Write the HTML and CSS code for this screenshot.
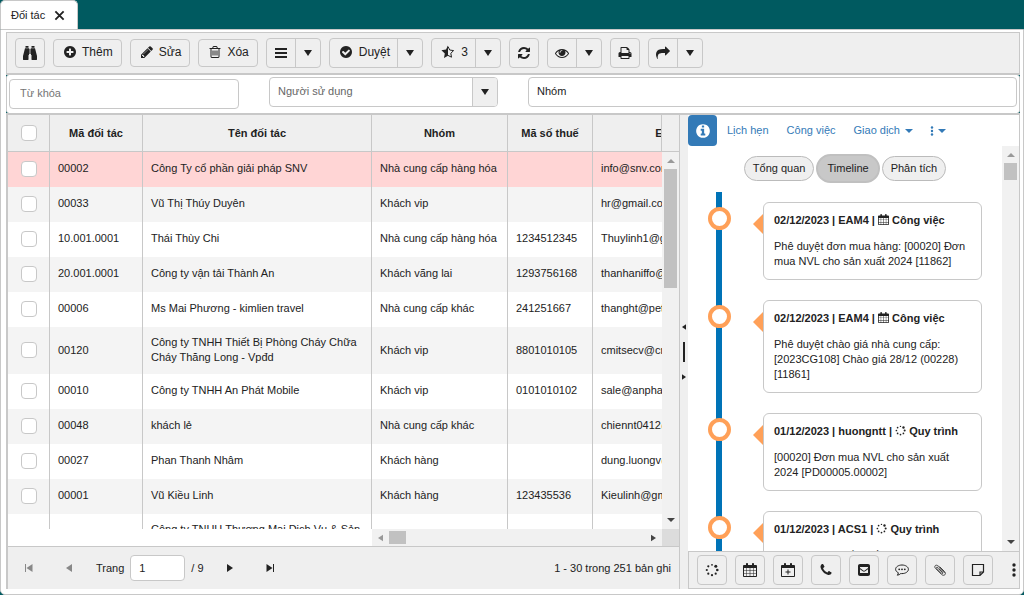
FILE: index.html
```
<!DOCTYPE html>
<html lang="vi">
<head>
<meta charset="utf-8">
<title>Đối tác</title>
<link rel="stylesheet" href="styles.css">
</head>
<body>
<svg class="sprite" aria-hidden="true">
  <symbol id="close" viewBox="0 0 12 12"><path d="M1.5 1.5l9 9M10.500 1.500l-9 9" stroke="currentColor" stroke-width="2"/></symbol>
  <symbol id="binoculars" viewBox="0 0 16 16"><path d="M3.500 1h3v1.800h-3zM9.500 1h3v1.800h-3zM3 3.300h4V10h-.5v4.500c0 .3-.2.500-.5.500H1.500c-.3 0-.5-.2-.5-.5V11zM9 3.300h4L15 11v3.500c0 .3-.2.500-.5.500H10c-.3 0-.5-.2-.5-.5V10H9zM7.400 3.800h1.200V9H7.400z"/></symbol>
  <symbol id="plus" viewBox="0 0 1792 1792"><path d="M1344 960v-128q0-26-19-45t-45-19h-256v-256q0-26-19-45t-45-19h-128q-26 0-45 19t-19 45v256h-256q-26 0-45 19t-19 45v128q0 26 19 45t45 19h256v256q0 26 19 45t45 19h128q26 0 45-19t19-45v-256h256q26 0 45-19t19-45zm320-64q0 209-103 385.500t-279.500 279.500-385.500 103-385.500-103-279.500-279.500-103-385.500 103-385.500 279.500-279.500 385.500-103 385.500 103 279.500 279.500 103 385.500z"/></symbol>
  <symbol id="pencil" viewBox="0 0 1792 1792"><path d="M491 1536l91-91-235-235-91 91v107h128v128h107zm523-928q0-22-22-22-10 0-17 7l-542 542q-7 7-7 17 0 22 22 22 10 0 17-7l542-542q7-7 7-17zm-54-192l416 416-832 832h-416v-416zm683 96q0 53-37 90l-166 166-416-416 166-165q36-38 90-38 53 0 91 38l235 234q37 39 37 91z"/></symbol>
  <symbol id="trash" viewBox="0 0 1792 1792"><path d="M704 736v576q0 14-9 23t-23 9h-64q-14 0-23-9t-9-23v-576q0-14 9-23t23-9h64q14 0 23 9t9 23zm256 0v576q0 14-9 23t-23 9h-64q-14 0-23-9t-9-23v-576q0-14 9-23t23-9h64q14 0 23 9t9 23zm256 0v576q0 14-9 23t-23 9h-64q-14 0-23-9t-9-23v-576q0-14 9-23t23-9h64q14 0 23 9t9 23zm128 724v-948h-896v948q0 22 7 40.500t14.500 27 10.500 8.500h832q3 0 10.500-8.500t14.500-27 7-40.500zm-672-1076h448l-48-117q-7-9-17-11h-317q-10 2-17 11zm928 32v64q0 14-9 23t-23 9h-96v948q0 83-47 143.500t-113 60.500h-832q-66 0-113-58.500t-47-141.500v-952h-96q-14 0-23-9t-9-23v-64q0-14 9-23t23-9h309l70-167q15-37 54-63t79-26h320q40 0 79 26t54 63l70 167h309q14 0 23 9t9 23z"/></symbol>
  <symbol id="bars" viewBox="0 0 14 14"><path d="M1 2h12v2H1zM1 6h12v2H1zM1 10h12v2H1z"/></symbol>
  <symbol id="check" viewBox="0 0 1792 1792"><path d="M1412 734q0-28-18-46l-91-90q-19-19-45-19t-45 19l-408 407-226-226q-19-19-45-19t-45 19l-91 90q-18 18-18 46 0 27 18 45l362 362q19 19 45 19 27 0 46-19l543-543q18-18 18-45zm252 162q0 209-103 385.500t-279.500 279.500-385.500 103-385.500-103-279.500-279.500-103-385.500 103-385.500 279.500-279.500 385.500-103 385.500 103 279.500 279.500 103 385.500z"/></symbol>
  <symbol id="star" viewBox="0 0 14 14"><path d="M7 .4v10.400l-4 2.300.8-4.600L.4 5.300 5 4.600z"/><path d="M7 1.500l1.700 3.500 3.900.6-2.800 2.700.7 3.900L7 10.400" fill="none" stroke="currentColor"/></symbol>
  <symbol id="refresh" viewBox="0 0 1792 1792"><path d="M1639 1056q0 5-1 7-64 268-268 434.500t-478 166.500q-146 0-282.500-55t-243.500-157l-129 129q-19 19-45 19t-45-19-19-45v-448q0-26 19-45t45-19h448q26 0 45 19t19 45-19 45l-137 137q71 66 161 102t187 36q134 0 250-65t186-179q11-17 53-117 8-23 30-23h192q13 0 22.500 9.500t9.500 22.500zm25-800v448q0 26-19 45t-45 19h-448q-26 0-45-19t-19-45 19-45l138-138q-148-137-349-137-134 0-250 65t-186 179q-11 17-53 117-8 23-30 23h-199q-13 0-22.500-9.500t-9.500-22.500v-7q65-268 270-434.500t480-166.500q146 0 284 55.500t245 156.500l130-129q19-19 45-19t45 19 19 45z"/></symbol>
  <symbol id="eye" viewBox="0 0 1792 1792"><path d="M1664 960q-152-236-381-353 61 104 61 225 0 185-131.500 316.500t-316.500 131.500-316.500-131.500-131.500-316.500q0-121 61-225-229 117-381 353 133 205 333.500 326.500t434.500 121.500 434.500-121.500 333.500-326.500zm-720-384q0-20-14-34t-34-14q-125 0-214.500 89.500t-89.500 214.500q0 20 14 34t34 14 34-14 14-34q0-86 61-147t147-61q20 0 34-14t14-34zm848 384q0 34-20 69-140 230-376.500 368.500t-499.500 138.500-499.500-139-376.500-368q-20-35-20-69t20-69q140-229 376.500-368t499.500-139 499.500 139 376.500 368q20 35 20 69z"/></symbol>
  <symbol id="print" viewBox="0 0 1792 1792"><path d="M448 1536h896v-256h-896v256zm0-640h896v-384h-160q-40 0-68-28t-28-68v-160h-640v640zm1152 64q0-26-19-45t-45-19-45 19-19 45 19 45 45 19 45-19 19-45zm128 0v416q0 13-9.500 22.500t-22.500 9.500h-224v160q0 40-28 68t-68 28h-960q-40 0-68-28t-28-68v-160h-224q-13 0-22.500-9.500t-9.500-22.500v-416q0-79 56.500-135.500t135.500-56.500h64v-544q0-40 28-68t68-28h672q40 0 88 20t76 48l152 152q28 28 48 76t20 88v256h64q79 0 135.500 56.500t56.500 135.500z"/></symbol>
  <symbol id="share" viewBox="0 0 1792 1792"><path d="M1792 640q0 26-19 45l-512 512q-19 19-45 19t-45-19-19-45v-256h-224q-98 0-175.500 6t-154 21.500-133 42.500-105.500 69.500-80 101-48.500 138.500-17.500 181q0 55 5 123 0 6 2.500 23.500t2.500 26.500q0 15-8.500 25t-23.500 10q-16 0-28-17-7-9-13-22t-13.500-30-10.500-24q-127-285-127-451 0-199 53-333 162-403 875-403h224v-256q0-26 19-45t45-19 45 19l512 512q19 19 19 45z"/></symbol>
  <symbol id="info" viewBox="0 0 1792 1792"><path d="M1152 1376v-160q0-14-9-23t-23-9h-96v-512q0-14-9-23t-23-9h-320q-14 0-23 9t-9 23v160q0 14 9 23t23 9h96v320h-96q-14 0-23 9t-9 23v160q0 14 9 23t23 9h448q14 0 23-9t9-23zm-128-896v-160q0-14-9-23t-23-9h-192q-14 0-23 9t-9 23v160q0 14 9 23t23 9h192q14 0 23-9t9-23zm640 416q0 209-103 385.500t-279.500 279.500-385.500 103-385.500-103-279.500-279.500-103-385.500 103-385.500 279.500-279.500 385.500-103 385.500 103 279.500 279.500 103 385.500z"/></symbol>
  <symbol id="phone" viewBox="0 0 1792 1792"><path d="M1600 1240q0 27-10 70.500t-21 68.500q-21 50-122 106-94 51-186 51-27 0-53-3.500t-57.500-12.500-47-14.500-55.500-20.500-49-18q-98-35-175-83-127-79-264-216t-216-264q-48-77-83-175-3-9-18-49t-20.500-55.500-14.500-47-12.500-57.500-3.500-53q0-92 51-186 56-101 106-122 25-11 68.500-21t70.500-10q14 0 21 3 18 6 53 76 11 19 30 54t35 63.500 31 53.500q3 4 17.500 25t21.500 35.500 7 28.500q0 20-28.500 50t-62 55-62 53-28.500 46q0 9 5 22.500t8.500 20.500 14 24 11.500 19q76 137 174 235t235 174q2 1 19 11.500t24 14 20.500 8.500 22.500 5q18 0 46-28.500t53-62 55-62 50-28.500q14 0 28.500 7t35.500 21.500 25 17.500q25 15 53.500 31t63.500 35 54 30q70 35 76 53 3 7 3 21z"/></symbol>
  <symbol id="calendar" viewBox="0 0 14 14"><path fill-rule="evenodd" d="M1 2h2V.8C3 .3 3.300 0 3.800 0h.4C4.700 0 5 .3 5 .8V2h4V.8C9 .3 9.300 0 9.800 0h.4c.5 0 .8.300.8.800V2h2c.5 0 1 .5 1 1v10c0 .5-.5 1-1 1H1c-.5 0-1-.5-1-1V3c0-.5.5-1 1-1zM1 5v2.200h2.500V5zM4 5v2.200h2.700V5zM7.300 5v2.200H10V5zM10.500 5v2.200H13V5zM1 7.700v2.500h2.500V7.700zM4 7.700v2.500h2.700V7.700zM7.300 7.700v2.500H10V7.700zM10.500 7.700v2.500H13V7.700zM1 10.700V13h2.500v-2.300zM4 10.700V13h2.700v-2.300zM7.300 10.700V13H10v-2.300zM10.500 10.700V13H13v-2.300z"/></symbol>
  <symbol id="calplus" viewBox="0 0 14 14"><path fill-rule="evenodd" d="M1 2h2V.8C3 .3 3.300 0 3.800 0h.4C4.700 0 5 .3 5 .8V2h4V.8C9 .3 9.300 0 9.800 0h.4c.5 0 .8.300.8.800V2h2c.5 0 1 .5 1 1v10c0 .5-.5 1-1 1H1c-.5 0-1-.5-1-1V3c0-.5.5-1 1-1zM1 5v8h12V5zM6.500 6.500h1v2h2v1h-2v2h-1v-2h-2v-1h2z"/></symbol>
  <symbol id="spinner" viewBox="0 0 14 14"><circle cx="7" cy="1.800" r=".9"/><circle cx="10.800" cy="3.200" r="1.500"/><circle cx="12.300" cy="7" r="1.300"/><circle cx="10.700" cy="10.700" r="1.100"/><circle cx="7" cy="12.200" r="1.100"/><circle cx="3.300" cy="10.700" r="1.100"/><circle cx="1.800" cy="7" r="1.100"/><circle cx="3.300" cy="3.300" r="1.100"/></symbol>
  <symbol id="envelope" viewBox="0 0 14 14"><path fill-rule="evenodd" d="M3 1h8c1.200 0 2 .8 2 2v8c0 1.200-.8 2-2 2H3c-1.200 0-2-.8-2-2V3c0-1.200.8-2 2-2zM3 4v1l3.300 2.400q.7.500 1.400 0L11 5V4zM3 6.300V10h8V6.300L8.200 8.300q-1.200.8-2.400 0z"/></symbol>
  <symbol id="comment" viewBox="0 0 14 14"><path d="M7 2c3.500 0 6.400 1.900 6.400 4.300S10.500 10.600 7 10.600q-.6 0-1.200-.1Q4.300 12 2.300 12.200q1-1 1-2.500C1.600 8.900.6 7.700.6 6.300.6 3.900 3.500 2 7 2z" fill="none" stroke="currentColor"/><circle cx="4.200" cy="6.300" r=".9"/><circle cx="7" cy="6.300" r=".9"/><circle cx="9.800" cy="6.300" r=".9"/></symbol>
  <symbol id="clip" viewBox="0 0 14 14"><path d="M11.900 9.700L5.200 3C2.900.9.500 3.300 2.600 5.500l6 6c2.500 2.200 5.200-.5 3-2.900L6.600 3.600M9.900 9.500L5 4.600C3.800 3.600 2.900 4.500 3.900 5.600l4.700 4.700c1 .7 1.700 0 .9-1L6.100 5.900" fill="none" stroke="currentColor" stroke-width=".8"/></symbol>
  <symbol id="note" viewBox="0 0 14 14"><path d="M1.500 1.500h11V9L9 12.500H1.500zM12.500 9H9v3.500" fill="none" stroke="currentColor" stroke-width="1.200"/></symbol>
  <symbol id="dots" viewBox="0 0 4 14"><circle cx="2" cy="2" r="1.700"/><circle cx="2" cy="7" r="1.700"/><circle cx="2" cy="12" r="1.700"/></symbol>
  <symbol id="down" viewBox="0 0 8 6"><path d="M0 0h8L4 6z"/></symbol>
  <symbol id="up" viewBox="0 0 8 4"><path d="M0 4h8L4 0z"/></symbol>
  <symbol id="caret" viewBox="0 0 8 4"><path d="M0 0h8L4 4z"/></symbol>
  <symbol id="left" viewBox="0 0 6 8"><path d="M6 0v8L0 4z"/></symbol>
  <symbol id="right" viewBox="0 0 6 8"><path d="M0 0v8l6-4z"/></symbol>
  <symbol id="first" viewBox="0 0 8 8"><path d="M0 0h1v8H0zM7.500 0v8l-6-4z"/></symbol>
  <symbol id="last" viewBox="0 0 8 8"><path d="M7 0h1v8H7zM.5 0v8l6-4z"/></symbol>
</svg>

<nav class="tabstrip">
  <div class="tab"><a href="#">Đối tác</a><button class="tab-close" aria-label="Đóng"><svg><use href="#close"/></svg></button></div>
</nav>

<main class="window">
  <div class="toolbar">
    <button class="btn icon" aria-label="Tìm"><svg><use href="#binoculars"/></svg></button>
    <button class="btn text"><svg class="s14"><use href="#plus"/></svg>Thêm</button>
    <button class="btn text"><svg class="s14"><use href="#pencil"/></svg>Sửa</button>
    <button class="btn text"><svg class="s14"><use href="#trash"/></svg>Xóa</button>
    <div class="split"><button class="part" aria-label="Danh sách"><svg class="s14"><use href="#bars"/></svg></button><button class="more" aria-label="Mở"><svg class="arrow"><use href="#down"/></svg></button></div>
    <div class="split"><button class="part wide"><svg class="s14"><use href="#check"/></svg>Duyệt</button><button class="more" aria-label="Mở"><svg class="arrow"><use href="#down"/></svg></button></div>
    <div class="split"><button class="part wide"><svg class="s14"><use href="#star"/></svg>3</button><button class="more" aria-label="Mở"><svg class="arrow"><use href="#down"/></svg></button></div>
    <button class="btn icon" aria-label="Tải lại"><svg class="s14"><use href="#refresh"/></svg></button>
    <div class="split"><button class="part" aria-label="Xem"><svg class="s14"><use href="#eye"/></svg></button><button class="more" aria-label="Mở"><svg class="arrow"><use href="#down"/></svg></button></div>
    <button class="btn icon" aria-label="In"><svg class="s14"><use href="#print"/></svg></button>
    <div class="split"><button class="part" aria-label="Chia sẻ"><svg class="s14"><use href="#share"/></svg></button><button class="more" aria-label="Mở"><svg class="arrow"><use href="#down"/></svg></button></div>
  </div>

  <div class="search-back">
    <form class="search">
      <input class="field keyword" type="text" placeholder="Từ khóa" aria-label="Từ khóa">
      <div class="combo">
        <select class="field" aria-label="Người sử dụng"><option>Người sử dụng</option></select>
        <span class="combo-arrow"><svg class="arrow"><use href="#down"/></svg></span>
      </div>
      <input class="field group" type="text" placeholder="Nhóm" aria-label="Nhóm">
    </form>
  </div>

  <div class="panes">
    <section class="grid">
      <div class="grid-view">
        <div class="table-clip">
          <table>
            <colgroup><col class="c-check"><col class="c-code"><col class="c-name"><col class="c-group"><col class="c-tax"><col class="c-mail"></colgroup>
            <thead><tr><th><input type="checkbox" aria-label="Chọn tất cả"></th><th>Mã đối tác</th><th>Tên đối tác</th><th>Nhóm</th><th>Mã số thuế</th><th>Email</th></tr></thead>
            <tbody>
              <tr class="selected"><td><input type="checkbox" aria-label="00002"></td><td>00002</td><td>Công Ty cổ phần giải pháp SNV</td><td>Nhà cung cấp hàng hóa</td><td></td><td>info@snv.com.vn</td></tr>
              <tr><td><input type="checkbox" aria-label="00033"></td><td>00033</td><td>Vũ Thị Thúy Duyên</td><td>Khách vip</td><td></td><td>hr@gmail.com</td></tr>
              <tr><td><input type="checkbox" aria-label="10.001.0001"></td><td>10.001.0001</td><td>Thái Thùy Chi</td><td>Nhà cung cấp hàng hóa</td><td>1234512345</td><td>Thuylinh1@gmail.com</td></tr>
              <tr><td><input type="checkbox" aria-label="20.001.0001"></td><td>20.001.0001</td><td>Công ty vận tải Thành An</td><td>Khách vãng lai</td><td>1293756168</td><td>thanhaniffo@gmail.com</td></tr>
              <tr><td><input type="checkbox" aria-label="00006"></td><td>00006</td><td>Ms Mai Phương - kimlien travel</td><td>Nhà cung cấp khác</td><td>241251667</td><td>thanght@petro.vn</td></tr>
              <tr class="tall"><td><input type="checkbox" aria-label="00120"></td><td>00120</td><td>Công ty TNHH Thiết Bị Phòng Cháy Chữa Cháy Thăng Long - Vpđd</td><td>Khách vip</td><td>8801010105</td><td>cmitsecv@cmit.vn</td></tr>
              <tr><td><input type="checkbox" aria-label="00010"></td><td>00010</td><td>Công ty TNHH An Phát Mobile</td><td>Khách vip</td><td>0101010102</td><td>sale@anphat.vn</td></tr>
              <tr><td><input type="checkbox" aria-label="00048"></td><td>00048</td><td>khách lẻ</td><td>Nhà cung cấp khác</td><td></td><td>chiennt0412@gmail.com</td></tr>
              <tr><td><input type="checkbox" aria-label="00027"></td><td>00027</td><td>Phan Thanh Nhâm</td><td>Khách hàng</td><td></td><td>dung.luongv@gmail.com</td></tr>
              <tr><td><input type="checkbox" aria-label="00001"></td><td>00001</td><td>Vũ Kiều Linh</td><td>Khách hàng</td><td>123435536</td><td>Kieulinh@gmail.com</td></tr>
              <tr class="tall"><td></td><td></td><td>Công ty TNHH Thương Mại Dịch Vụ &amp; Sản Xuất</td><td></td><td></td><td></td></tr>
            </tbody>
          </table>
        </div>
        <div class="grid-side">
          <div class="head-fill"></div>
          <div class="vscroll"><svg class="sb-v pale"><use href="#up"/></svg><div class="thumb grid-thumb"></div><svg class="sb-v end"><use href="#caret"/></svg></div>
        </div>
      </div>
      <div class="hscroll-row">
        <div class="hscroll"><svg class="sb-h pale"><use href="#left"/></svg><div class="h-thumb"></div><svg class="sb-h end"><use href="#right"/></svg></div>
        <div class="corner"></div>
      </div>
      <div class="pager">
        <button class="page-btn" disabled aria-label="Trang đầu"><svg><use href="#first"/></svg></button>
        <button class="page-btn" disabled aria-label="Trang trước"><svg class="slim"><use href="#left"/></svg></button>
        <label class="page-label" for="page">Trang</label>
        <input id="page" class="page-input" type="text" value="1">
        <span class="page-total">/ 9</span>
        <button class="page-btn" aria-label="Trang sau"><svg class="slim"><use href="#right"/></svg></button>
        <button class="page-btn" aria-label="Trang cuối"><svg><use href="#last"/></svg></button>
        <span class="records">1 - 30 trong 251 bản ghi</span>
      </div>
    </section>

    <div class="splitter"><svg><use href="#left"/></svg><div class="handle"></div><svg><use href="#right"/></svg></div>

    <aside class="detail">
      <nav class="detail-tabs">
        <a class="info" href="#" aria-label="Thông tin"><svg><use href="#info"/></svg></a>
        <a href="#">Lịch hẹn</a>
        <a href="#">Công việc</a>
        <a href="#">Giao dịch<svg class="caret"><use href="#caret"/></svg></a>
        <a href="#" class="kebab" aria-label="Thêm"><svg class="vdots"><use href="#dots"/></svg><svg class="caret"><use href="#caret"/></svg></a>
      </nav>
      <div class="detail-body">
        <div class="detail-content">
          <div class="pills"><button class="pill">Tổng quan</button><button class="pill active">Timeline</button><button class="pill">Phân tích</button></div>
          <ol class="timeline">
            <li><article class="card"><h3>02/12/2023 | EAM4 | <svg><use href="#calendar"/></svg> Công việc</h3><p>Phê duyệt đơn mua hàng: [00020] Đơn mua NVL cho sản xuất 2024 [11862]</p></article></li>
            <li><article class="card"><h3>02/12/2023 | EAM4 | <svg><use href="#calendar"/></svg> Công việc</h3><p>Phê duyệt chào giá nhà cung cấp: [2023CG108] Chào giá 28/12 (00228) [11861]</p></article></li>
            <li><article class="card"><h3>01/12/2023 | huongntt | <svg><use href="#spinner"/></svg> Quy trình</h3><p>[00020] Đơn mua NVL cho sản xuất 2024 [PD00005.00002]</p></article></li>
            <li><article class="card"><h3>01/12/2023 | ACS1 | <svg><use href="#spinner"/></svg> Quy trình</h3><p>[00018] Duyệt đề xuất</p></article></li>
          </ol>
        </div>
        <div class="vscroll"><svg class="sb-v pale"><use href="#up"/></svg><div class="thumb detail-thumb"></div><svg class="sb-v end"><use href="#caret"/></svg></div>
      </div>
      <footer class="actions">
        <button class="btn icon" aria-label="Quy trình"><svg class="s14"><use href="#spinner"/></svg></button>
        <button class="btn icon" aria-label="Lịch"><svg class="s14"><use href="#calendar"/></svg></button>
        <button class="btn icon" aria-label="Thêm lịch"><svg class="s14"><use href="#calplus"/></svg></button>
        <button class="btn icon" aria-label="Gọi"><svg class="s14"><use href="#phone"/></svg></button>
        <button class="btn icon" aria-label="Thư"><svg class="s14"><use href="#envelope"/></svg></button>
        <button class="btn icon" aria-label="Bình luận"><svg class="s14"><use href="#comment"/></svg></button>
        <button class="btn icon" aria-label="Đính kèm"><svg class="s14"><use href="#clip"/></svg></button>
        <button class="btn icon" aria-label="Ghi chú"><svg class="s14"><use href="#note"/></svg></button>
        <button class="overflow" aria-label="Khác"><svg><use href="#dots"/></svg></button>
      </footer>
    </aside>
  </div>
</main>
</body>
</html>
```

FILE: styles.css
```
:root {
  --line: #c8c8c8;
  --bar: #efefef;
  --ink: #222;
  --teal: #005a60;
  --blue: #337ab7;
}
*, *::before, *::after { box-sizing: border-box; }
body {
  margin: 0;
  height: 100vh;
  display: flex;
  flex-direction: column;
  overflow: hidden;
  background: var(--teal);
  color: var(--ink);
  font: 11px/15px "Liberation Sans", Arial, sans-serif;
}
button, input, select { font: inherit; color: inherit; margin: 0; padding: 0; }
button { border: 0; background: none; }
a { color: inherit; text-decoration: none; }
svg { display: block; fill: currentColor; flex: none; width: 16px; height: 16px; }
.sprite { position: absolute; width: 0; height: 0; }
.s14 { width: 14px; height: 14px; }
.arrow { width: 8px; height: 6px; }

.tabstrip { flex: none; height: 29px; display: flex; }
.tab {
  display: flex;
  align-items: center;
  gap: 9px;
  padding: 0 12px 0 10px;
  background: #fff;
  border: 1px solid var(--line);
  border-bottom: 0;
  border-radius: 5px 5px 0 0;
}
.tab-close svg { width: 11px; height: 11px; }

.window {
  flex: 1;
  min-height: 0;
  display: flex;
  flex-direction: column;
  padding: 2px 3px 5px 5px;
  background: #fff;
  border: 1px solid var(--line);
  border-radius: 0 0 5px 5px;
}

.toolbar {
  flex: none;
  display: flex;
  align-items: center;
  gap: 8px;
  padding: 5px 8px;
  background: var(--bar);
  border: 1px solid var(--line);
  border-bottom-width: 2px;
  font-size: 12px;
}
.btn {
  display: flex;
  align-items: center;
  justify-content: center;
  border: 1px solid var(--line);
  border-radius: 4px;
}
.btn.icon { flex: none; width: 30px; height: 30px; }
.btn.text { height: 28px; gap: 5px; padding: 0 8px 2px 9px; }
.split {
  display: flex;
  height: 30px;
  border: 1px solid var(--line);
  border-radius: 4px;
}
.part { display: flex; align-items: center; justify-content: center; min-width: 28px; gap: 6px; }
.part.wide { padding: 0 7px 2px 9px; }
.more { display: flex; align-items: center; justify-content: center; width: 25px; border-left: 1px solid var(--line); }

.search-back { flex: none; background: var(--teal); }
.search {
  display: grid;
  grid-template-columns: 230px 229px 1fr;
  gap: 30px;
  padding: 2px 2px 6px;
  background: #fff;
  border: 1px solid var(--line);
  border-width: 0 1px;
  border-radius: 3px;
}
.field {
  width: 100%;
  height: 30px;
  padding: 0 8px 2px;
  background: #fff;
  border: 1px solid var(--line);
  border-radius: 4px;
  outline: 0;
}
.keyword { margin-top: 2px; margin-bottom: -2px; padding-left: 10px; }
.keyword::placeholder { color: #757575; }
.group::placeholder { color: var(--ink); }
.combo { position: relative; }
.combo .field { appearance: none; color: #666; }
.combo-arrow {
  position: absolute;
  top: 1px;
  right: 1px;
  bottom: 1px;
  width: 25px;
  display: flex;
  align-items: center;
  justify-content: center;
  background: var(--bar);
  border-left: 1px solid var(--line);
  border-radius: 0 3px 3px 0;
  pointer-events: none;
}

.panes {
  flex: 1;
  min-height: 0;
  display: flex;
  border-top: 2px solid var(--line);
}
.grid {
  flex: 1;
  min-width: 0;
  display: flex;
  flex-direction: column;
  border-left: 2px solid var(--line);
  border-right: 1px solid var(--line);
}
.grid-view { flex: 1; min-height: 0; display: flex; }
.table-clip { flex: 1; min-width: 0; overflow: hidden; }
table { width: 740px; table-layout: fixed; border-collapse: separate; border-spacing: 0; }
.c-check { width: 42px; }
.c-code { width: 93px; }
.c-name { width: 229px; }
.c-group { width: 136px; }
.c-tax { width: 85px; }
.c-mail { width: 155px; }
th {
  height: 37px;
  padding: 1px 0 0;
  background: var(--bar);
  border-right: 1px solid var(--line);
  border-bottom: 1px solid var(--line);
}
td { height: 35px; padding: 0 8px 2px; border-right: 1px solid var(--line); }
.tall td { height: 47px; padding-bottom: 1px; }
th:first-child { padding: 0; text-align: center; }
td:first-child { padding: 0 0 2px; text-align: center; }
tbody tr:nth-child(even) { background: #f4f4f4; }
tbody tr.selected { background: #ffd5d5; }
input[type="checkbox"] {
  appearance: none;
  display: inline-block;
  width: 16px;
  height: 16px;
  vertical-align: middle;
  background: #fff;
  border: 1px solid var(--line);
  border-radius: 4px;
}
.grid-side { width: 17px; display: flex; flex-direction: column; }
.head-fill {
  position: relative;
  height: 37px;
  margin-left: -1px;
  background: var(--bar);
  border-left: 1px solid var(--line);
  border-bottom: 1px solid var(--line);
}
.vscroll {
  flex: 1;
  display: flex;
  flex-direction: column;
  align-items: center;
  padding: 7px 2px;
  background: #f1f1f1;
}
.sb-v { width: 8px; height: 4px; color: #444; }
.sb-h { width: 5px; height: 8px; color: #444; }
.pale { color: #999; }
.end { margin-top: auto; }
.thumb { width: 13px; margin-top: 6px; background: #c1c1c1; }
.grid-thumb { height: 119px; }
.detail-thumb { height: 17px; }
.hscroll-row { flex: none; height: 17px; display: flex; }
.hscroll {
  flex: 1;
  display: flex;
  align-items: center;
  margin-left: 364px;
  padding: 0 6px;
  background: #f1f1f1;
}
.hscroll .end { margin: 0 0 0 auto; }
.h-thumb { width: 17px; height: 13px; margin-left: 6px; background: #c1c1c1; }
.corner { width: 17px; background: #dcdcdc; }
.pager {
  flex: none;
  height: 43px;
  display: flex;
  align-items: center;
  padding: 0 8px 0 1px;
  background: var(--bar);
  border-top: 1px solid var(--line);
}
.page-btn { width: 40px; height: 28px; display: flex; align-items: center; justify-content: center; }
.page-btn:disabled { color: #888; }
.page-btn svg { width: 8px; height: 8px; }
.page-btn .slim { width: 6px; }
.page-label { margin-left: 7px; }
.page-input {
  width: 55px;
  height: 26px;
  margin: 0 6px;
  padding: 0 8px;
  background: #fff;
  border: 1px solid var(--line);
  border-radius: 4px;
}
.page-total { margin-right: 6px; }
.records { margin-left: auto; }

.splitter {
  width: 8px;
  display: flex;
  flex-direction: column;
  align-items: center;
  justify-content: center;
  gap: 12px;
  background: var(--bar);
}
.splitter svg { width: 4px; height: 6px; }
.handle { width: 2px; height: 20px; background: var(--ink); }

.detail {
  flex: none;
  width: 332px;
  display: flex;
  flex-direction: column;
  min-width: 0;
  border-right: 1px solid var(--line);
}
.detail-tabs { flex: none; display: flex; align-items: center; height: 31px; color: var(--blue); gap: 18px; }
.detail-tabs a { display: flex; align-items: center; gap: 5px; }
.detail-tabs .info {
  width: 29px;
  height: 31px;
  justify-content: center;
  margin-right: -8px;
  background: var(--blue);
  border-radius: 4px;
  color: #fff;
}
.detail-tabs .kebab { gap: 4px; margin-left: -1px; }
.caret { width: 8px; height: 4px; }
.vdots { width: 4px; height: 10px; }
.detail-body { flex: 1; min-height: 0; display: flex; }
.detail-content { flex: 1; min-width: 0; overflow: hidden; }
.detail-body .vscroll { flex: none; width: 17px; }
.pills { display: flex; align-items: center; justify-content: center; gap: 2px; padding: 8px 0; }
.pill {
  height: 25px;
  padding: 0 8px;
  background: var(--bar);
  border: 1px solid #bbb;
  border-radius: 13px;
}
.pill.active { height: 29px; padding: 0 9px; background: #c8c8c8; border: 2px solid #c0c0c0; border-radius: 15px; }
.timeline {
  position: relative;
  display: flex;
  flex-direction: column;
  gap: 20px;
  margin: 0;
  padding: 11px 20px 20px 75px;
  list-style: none;
}
.timeline::before {
  content: "";
  position: absolute;
  top: 1px;
  bottom: 0;
  left: 28px;
  width: 6px;
  background: #0073b7;
}
.timeline li { position: relative; }
.timeline li::before {
  content: "";
  position: absolute;
  top: 5px;
  left: -55px;
  width: 23px;
  height: 23px;
  background: #fff;
  border: 4px solid #ffa058;
  border-radius: 50%;
}
.timeline li::after {
  content: "";
  position: absolute;
  top: 12px;
  left: -10px;
  border: 10px solid transparent;
  border-left-width: 0;
  border-right-color: #ffa058;
}
.card { padding: 10px; border: 1px solid var(--line); border-radius: 6px; }
.card h3 { margin: 0 0 11px; font-size: 11px; }
.card h3 svg { display: inline-block; width: 11px; height: 11px; vertical-align: -1px; }
.card p { margin: 0; }
.actions {
  flex: none;
  height: 38px;
  display: flex;
  align-items: center;
  gap: 8px;
  padding: 0 3px 0 8px;
  overflow: hidden;
  background: var(--bar);
  border: 1px solid var(--line);
  border-right: 0;
}
.overflow { margin-left: auto; }
.overflow svg { width: 4px; height: 14px; }
```
